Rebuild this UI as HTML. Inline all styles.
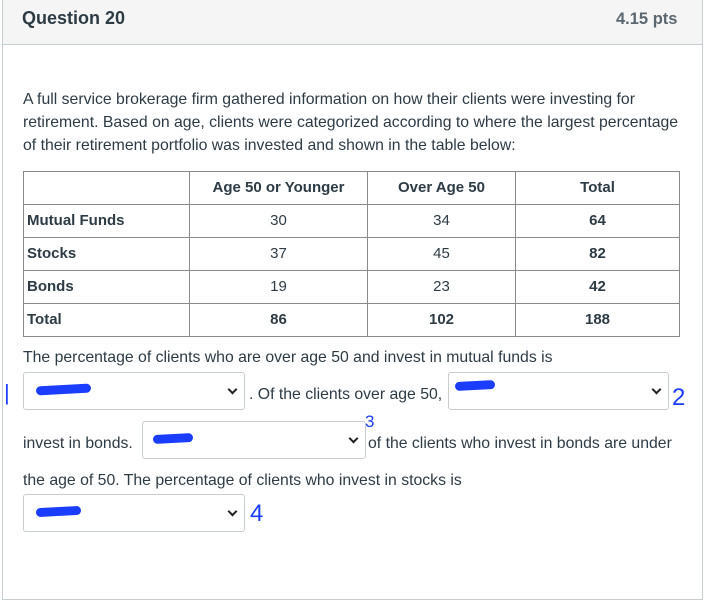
<!DOCTYPE html>
<html><head><style>
body{margin:0;background:#fff;font-family:"Liberation Sans",sans-serif;color:#2d3b45;}
.box{position:absolute;left:2px;top:0;width:699px;height:599px;border:1px solid #c7cdd1;border-top:none;}
.hdr{position:absolute;left:0;top:0;width:699px;height:44px;background:#f5f5f5;border-bottom:1px solid #c7cdd1;}
.t{position:absolute;white-space:nowrap;font-size:15.8px;}
table{position:absolute;left:23px;top:171px;width:656px;border-collapse:collapse;table-layout:fixed;font-size:15px;}
tr{height:33px;}
td,th{border:1px solid #8a8a8a;padding:0 3px;text-align:center;line-height:16px;}
td.l{text-align:left;font-weight:bold;}
.sel{position:absolute;border:1px solid #c7cdd1;border-radius:3px;background:#fff;height:36px;}
.sel:after{content:"";position:absolute;right:8px;top:13px;width:5px;height:5px;border-right:2px solid #222;border-bottom:2px solid #222;transform:rotate(45deg);}
.scr{position:absolute;left:12px;top:12px;width:50px;height:9px;background:#1a3dff;border-radius:5px;transform:rotate(-3deg);}
.hw{position:absolute;color:#1a3dff;font-size:24px;font-family:"Liberation Sans",sans-serif;}
</style></head><body>
<div class="box"><div class="hdr"></div></div>
<div class="t" style="left:22px;top:8px;font-size:18px;font-weight:bold;color:#2d3b45">Question 20</div>
<div class="t" style="left:616px;top:10px;font-size:16.5px;font-weight:bold;color:#5a6670">4.15 pts</div>
<div class="t" style="left:23px;top:88px;line-height:23px;">A full service brokerage firm gathered information on how their clients were investing for<br>retirement. Based on age, clients were categorized according to where the largest percentage<br>of their retirement portfolio was invested and shown in the table below:</div>
<table>
<colgroup><col style="width:166px"><col style="width:178px"><col style="width:148px"><col style="width:164px"></colgroup>
<tr><th></th><th>Age 50 or Younger</th><th>Over Age 50</th><th>Total</th></tr>
<tr><td class="l">Mutual Funds</td><td>30</td><td>34</td><td><b>64</b></td></tr>
<tr><td class="l">Stocks</td><td>37</td><td>45</td><td><b>82</b></td></tr>
<tr><td class="l">Bonds</td><td>19</td><td>23</td><td><b>42</b></td></tr>
<tr><td class="l">Total</td><td><b>86</b></td><td><b>102</b></td><td><b>188</b></td></tr>
</table>
<div class="t" style="left:23px;top:349px;">The percentage of clients who are over age 50 and invest in mutual funds is</div>
<div class="sel" style="left:23px;top:372px;width:220px"><div class="scr" style="width:55px"></div></div>
<div class="t" style="left:249px;top:386px;">. Of the clients over age 50,</div>
<div class="sel" style="left:448px;top:372px;width:219px"><div class="scr" style="width:40px;left:6px;top:8px"></div></div>
<div class="hw" style="left:672px;top:384px">2</div>
<div class="hw" style="left:4px;top:380px;font-size:22px">|</div>
<div class="t" style="left:23px;top:435px;">invest in bonds.</div>
<div class="sel" style="left:142px;top:421px;width:222px"><div class="scr" style="width:40px;left:10px"></div></div>
<div class="hw" style="left:365px;top:412px;font-size:17px">3</div>
<div class="t" style="left:368px;top:435px;">of the clients who invest in bonds are under</div>
<div class="t" style="left:23px;top:472px;">the age of 50. The percentage of clients who invest in stocks is</div>
<div class="sel" style="left:23px;top:494px;width:220px"><div class="scr" style="width:45px"></div></div>
<div class="hw" style="left:250px;top:500px">4</div>
</body></html>
